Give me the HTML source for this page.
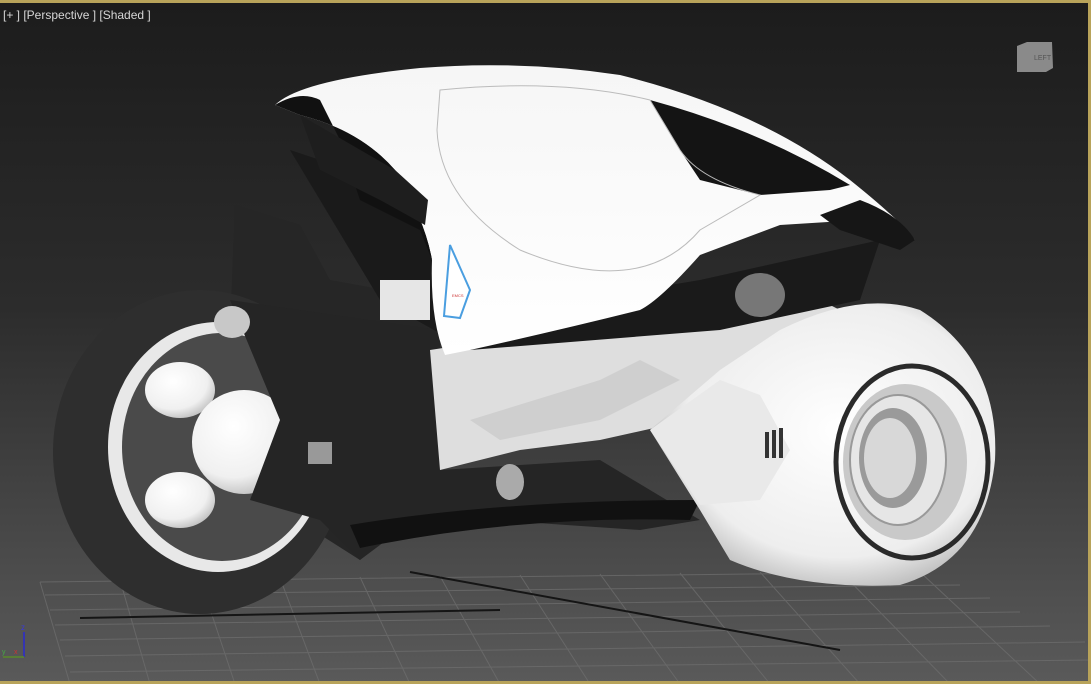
<!DOCTYPE html>
<html><head><meta charset="utf-8"><style>
html,body{margin:0;padding:0;width:1091px;height:684px;overflow:hidden;background:#2a2a2a}
svg{display:block}
</style></head><body>
<svg width="1091" height="684" viewBox="0 0 1091 684" xmlns="http://www.w3.org/2000/svg">
<defs>
<linearGradient id="bg" x1="0" y1="0" x2="0" y2="1">
<stop offset="0" stop-color="#1c1c1c"/><stop offset="0.45" stop-color="#2c2c2c"/><stop offset="1" stop-color="#5a5a5a"/>
</linearGradient>
<radialGradient id="wh" cx="0.4" cy="0.35" r="0.7"><stop offset="0" stop-color="#ffffff"/><stop offset="0.7" stop-color="#f0f0f0"/><stop offset="1" stop-color="#bdbdbd"/></radialGradient>
<radialGradient id="fw" cx="0.55" cy="0.45" r="0.6"><stop offset="0" stop-color="#ffffff"/><stop offset="0.75" stop-color="#eeeeee"/><stop offset="1" stop-color="#b5b5b5"/></radialGradient>
<linearGradient id="canopy" x1="0" y1="0" x2="0" y2="1"><stop offset="0" stop-color="#f6f6f6"/><stop offset="1" stop-color="#ffffff"/></linearGradient>
</defs>
<rect width="1091" height="684" fill="url(#bg)"/>
<g stroke="#6e6e6e" stroke-width="1" fill="none" opacity="0.75">
<path d="M40 582 L930 572 M45 595 L960 585 M50 610 L990 598 M55 625 L1020 612 M60 640 L1050 626 M65 656 L1085 642 M70 672 L1091 660"/>
<path d="M40 582 L70 684 M120 580 L150 684 M200 579 L235 684 M280 578 L320 684 M360 577 L410 684 M440 576 L500 684 M520 575 L590 684 M600 574 L680 684 M680 573 L770 684 M760 572 L860 684 M840 571 L950 684 M920 572 L1040 684"/>
</g>
<path d="M410 572 L840 650" stroke="#151515" stroke-width="2"/>
<path d="M80 618 L500 610" stroke="#151515" stroke-width="2"/>
<path d="M235 205 L300 225 L330 280 L440 300 L440 440 L360 560 L250 490 L230 330 Z" fill="#262626"/>
<ellipse cx="200" cy="452" rx="147" ry="162" fill="#2e2e2e"/>
<ellipse cx="218" cy="447" rx="110" ry="125" fill="#e8e8e8"/>
<ellipse cx="222" cy="447" rx="100" ry="114" fill="#4a4a4a"/>
<ellipse cx="180" cy="390" rx="35" ry="28" fill="url(#wh)"/>
<ellipse cx="180" cy="500" rx="35" ry="28" fill="url(#wh)"/>
<circle cx="244" cy="442" r="52" fill="url(#wh)"/>
<path d="M230 300 L440 330 L440 470 L600 460 L700 520 L640 530 L420 515 L360 560 L320 520 L250 500 L280 420 Z" fill="#252525"/>
<path d="M350 525 Q500 500 700 500 L690 520 Q520 515 360 548 Z" fill="#111"/>
<ellipse cx="232" cy="322" rx="18" ry="16" fill="#c8c8c8"/>
<rect x="308" y="442" width="24" height="22" fill="#999"/>
<path d="M430 350 L560 330 L700 310 L800 290 L840 310 L780 380 L690 420 L600 440 L520 450 L440 470 Z" fill="#dedede"/>
<path d="M470 420 L600 380 L640 360 L680 380 L600 420 L500 440 Z" fill="#cfcfcf"/>
<ellipse cx="510" cy="482" rx="14" ry="18" fill="#aaa"/>
<path d="M650 430 L720 370 L780 330 Q860 290 920 310 Q1000 360 995 460 Q985 560 900 585 Q800 590 730 560 L700 510 Z" fill="url(#fw)"/>
<path d="M650 430 L720 380 L760 395 L790 450 L760 500 L700 505 Z" fill="#e9e9e9"/>
<g fill="#333"><rect x="765" y="432" width="4" height="26"/><rect x="772" y="430" width="4" height="28"/><rect x="779" y="428" width="4" height="30"/></g>
<ellipse cx="912" cy="462" rx="76" ry="96" fill="none" stroke="#2a2a2a" stroke-width="5"/>
<ellipse cx="905" cy="462" rx="62" ry="78" fill="#c9c9c9"/>
<ellipse cx="898" cy="460" rx="48" ry="65" fill="#e6e6e6" stroke="#999" stroke-width="2"/>
<ellipse cx="893" cy="458" rx="34" ry="50" fill="#9a9a9a"/>
<ellipse cx="890" cy="458" rx="26" ry="40" fill="#d8d8d8"/>
<path d="M290 150 L440 200 L520 310 L700 280 L880 240 L860 300 L720 330 L470 350 L380 300 Z" fill="#1a1a1a"/>
<ellipse cx="760" cy="295" rx="25" ry="22" fill="#777"/>
<rect x="380" y="280" width="50" height="40" fill="#e6e6e6"/>
<path d="M275 105 Q300 80 420 68 Q520 60 620 75 Q760 110 850 180 Q900 220 915 240 Q880 225 860 220 L780 225 L700 255 Q660 300 640 310 Q560 330 470 350 L445 355 Q430 320 432 260 Q425 220 395 170 Q360 130 300 115 Z" fill="url(#canopy)"/>
<path d="M275 105 Q300 90 320 100 L340 140 L360 200 L420 230 L432 260 Q425 220 395 170 Q360 130 300 115 Z" fill="#111"/>
<path d="M300 115 L395 170 L428 200 L425 225 L380 200 L320 170 Z" fill="#1e1e1e"/>
<path d="M650 100 Q760 130 850 185 L830 190 L760 195 L700 180 L680 150 Z" fill="#141414"/>
<path d="M860 200 Q900 215 915 240 L900 250 L840 230 L820 215 Z" fill="#161616"/>
<path d="M440 90 Q560 78 650 100 L680 150 Q700 180 760 195 L700 230 Q640 300 520 250 Q440 200 437 130 Z" fill="none" stroke="#bbb" stroke-width="1"/>
<path d="M450 245 L470 290 L460 318 L444 316 Z" fill="#fff" stroke="#4a9ee0" stroke-width="2"/>
<text x="452" y="297" font-family="Liberation Sans,sans-serif" font-size="4" fill="#c33">EMCS</text>
<text x="3" y="19" font-family="Liberation Sans,sans-serif" font-size="12" fill="#d6d6d6">[+ ] [Perspective ] [Shaded ]</text>
<path d="M1017 46 L1027 42 L1052 42 L1053 68 L1046 72 L1017 72 Z" fill="#8a8a8a"/>
<text x="1034" y="60" font-family="Liberation Sans,sans-serif" font-size="7" fill="#555">LEFT</text>
<line x1="24" y1="632" x2="24" y2="657" stroke="#2a2ad0" stroke-width="1.5"/>
<line x1="3" y1="657" x2="24" y2="657" stroke="#5a8a2a" stroke-width="1.5"/>
<text x="21" y="630" font-family="Liberation Sans,sans-serif" font-size="8" fill="#3a3ad8">z</text>
<text x="14" y="654" font-family="Liberation Sans,sans-serif" font-size="7" fill="#c33">x</text>
<text x="2" y="654" font-family="Liberation Sans,sans-serif" font-size="7" fill="#4a4">y</text>
<rect x="0" y="0" width="1091" height="3" fill="#b8a35a"/>
<rect x="1088" y="0" width="3" height="684" fill="#b8a35a"/>
<rect x="0" y="681" width="1091" height="3" fill="#b8a35a"/>
</svg>
</body></html>
